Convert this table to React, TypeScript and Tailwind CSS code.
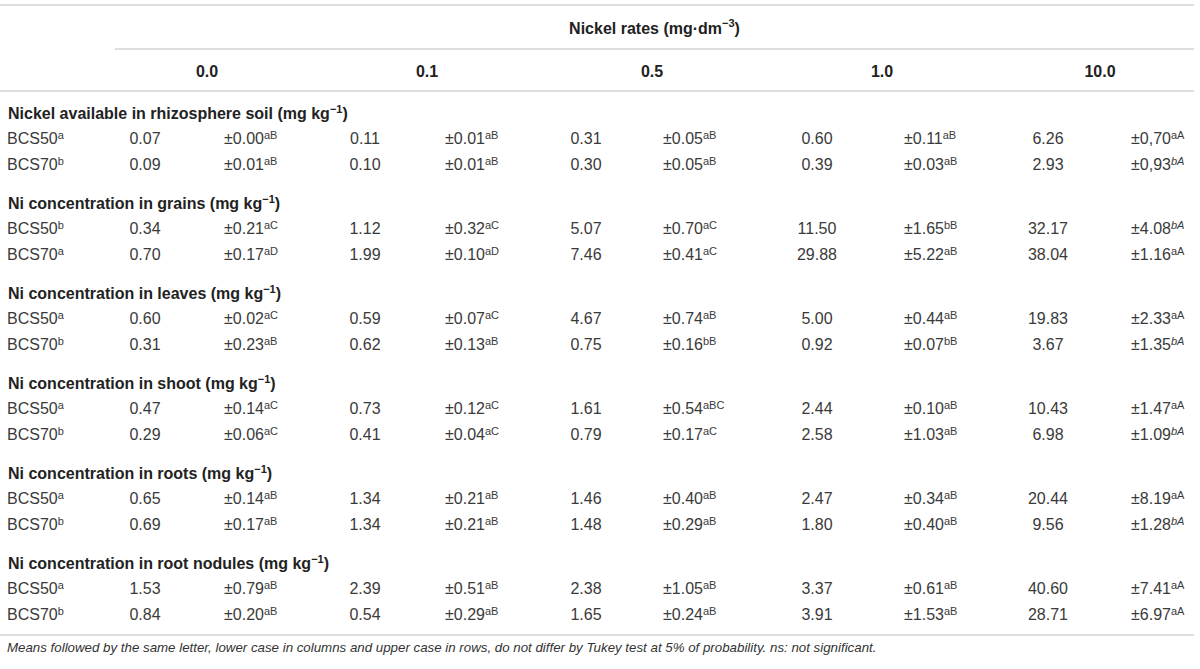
import React from 'react';

interface Row {
  label: string;
  mark: string;
  cells: [string, string, string, boolean?][];
}

interface Group {
  title: string;
  rows: Row[];
}

const groups: Group[] = [
  {
    title: 'Nickel available in rhizosphere soil',
    rows: [
      {
        label: 'BCS50',
        mark: 'a',
        cells: [
          ['0.07', '±0.00', 'aB'],
          ['0.11', '±0.01', 'aB'],
          ['0.31', '±0.05', 'aB'],
          ['0.60', '±0.11', 'aB'],
          ['6.26', '±0,70', 'aA'],
        ],
      },
      {
        label: 'BCS70',
        mark: 'b',
        cells: [
          ['0.09', '±0.01', 'aB'],
          ['0.10', '±0.01', 'aB'],
          ['0.30', '±0.05', 'aB'],
          ['0.39', '±0.03', 'aB'],
          ['2.93', '±0,93', 'bA', true],
        ],
      },
    ],
  },
  {
    title: 'Ni concentration in grains',
    rows: [
      {
        label: 'BCS50',
        mark: 'b',
        cells: [
          ['0.34', '±0.21', 'aC'],
          ['1.12', '±0.32', 'aC'],
          ['5.07', '±0.70', 'aC'],
          ['11.50', '±1.65', 'bB'],
          ['32.17', '±4.08', 'bA', true],
        ],
      },
      {
        label: 'BCS70',
        mark: 'a',
        cells: [
          ['0.70', '±0.17', 'aD'],
          ['1.99', '±0.10', 'aD'],
          ['7.46', '±0.41', 'aC'],
          ['29.88', '±5.22', 'aB'],
          ['38.04', '±1.16', 'aA'],
        ],
      },
    ],
  },
  {
    title: 'Ni concentration in leaves',
    rows: [
      {
        label: 'BCS50',
        mark: 'a',
        cells: [
          ['0.60', '±0.02', 'aC'],
          ['0.59', '±0.07', 'aC'],
          ['4.67', '±0.74', 'aB'],
          ['5.00', '±0.44', 'aB'],
          ['19.83', '±2.33', 'aA'],
        ],
      },
      {
        label: 'BCS70',
        mark: 'b',
        cells: [
          ['0.31', '±0.23', 'aB'],
          ['0.62', '±0.13', 'aB'],
          ['0.75', '±0.16', 'bB'],
          ['0.92', '±0.07', 'bB'],
          ['3.67', '±1.35', 'bA', true],
        ],
      },
    ],
  },
  {
    title: 'Ni concentration in shoot',
    rows: [
      {
        label: 'BCS50',
        mark: 'a',
        cells: [
          ['0.47', '±0.14', 'aC'],
          ['0.73', '±0.12', 'aC'],
          ['1.61', '±0.54', 'aBC'],
          ['2.44', '±0.10', 'aB'],
          ['10.43', '±1.47', 'aA'],
        ],
      },
      {
        label: 'BCS70',
        mark: 'b',
        cells: [
          ['0.29', '±0.06', 'aC'],
          ['0.41', '±0.04', 'aC'],
          ['0.79', '±0.17', 'aC'],
          ['2.58', '±1.03', 'aB'],
          ['6.98', '±1.09', 'bA', true],
        ],
      },
    ],
  },
  {
    title: 'Ni concentration in roots',
    rows: [
      {
        label: 'BCS50',
        mark: 'a',
        cells: [
          ['0.65', '±0.14', 'aB'],
          ['1.34', '±0.21', 'aB'],
          ['1.46', '±0.40', 'aB'],
          ['2.47', '±0.34', 'aB'],
          ['20.44', '±8.19', 'aA'],
        ],
      },
      {
        label: 'BCS70',
        mark: 'b',
        cells: [
          ['0.69', '±0.17', 'aB'],
          ['1.34', '±0.21', 'aB'],
          ['1.48', '±0.29', 'aB'],
          ['1.80', '±0.40', 'aB'],
          ['9.56', '±1.28', 'bA', true],
        ],
      },
    ],
  },
  {
    title: 'Ni concentration in root nodules',
    rows: [
      {
        label: 'BCS50',
        mark: 'a',
        cells: [
          ['1.53', '±0.79', 'aB'],
          ['2.39', '±0.51', 'aB'],
          ['2.38', '±1.05', 'aB'],
          ['3.37', '±0.61', 'aB'],
          ['40.60', '±7.41', 'aA'],
        ],
      },
      {
        label: 'BCS70',
        mark: 'b',
        cells: [
          ['0.84', '±0.20', 'aB'],
          ['0.54', '±0.29', 'aB'],
          ['1.65', '±0.24', 'aB'],
          ['3.91', '±1.53', 'aB'],
          ['28.71', '±6.97', 'aA'],
        ],
      },
    ],
  },
];

// column tracks: label | value/sd x5
const cols = 'grid grid-cols-[110px_70px_150px_70px_151px_70px_161px_70px_161px_70px_111px]';
const sdPad = ['pl-[44px]', 'pl-[45px]', 'pl-[42px]', 'pl-[52px]', 'pl-[48px]'];

const rates = [
  { label: '0.0', pad: 'pr-[26px]' },
  { label: '0.1', pad: 'pr-[27px]' },
  { label: '0.5', pad: 'pr-[29px]' },
  { label: '1.0', pad: 'pr-[31px]' },
  { label: '10.0', pad: 'pr-[7px]' },
];

function Sup({ children, italic }: { children: React.ReactNode; italic?: boolean }) {
  return <sup className={`text-[11px] ${italic ? 'italic' : ''}`}>{children}</sup>;
}

export default function App() {
  return (
    <div className="w-[1200px] h-[669px] bg-white pt-[4px] text-[16px] text-[#3a3a3a] font-['Liberation_Sans',Arial,sans-serif]">
      <div className="w-[1194px]">
        <div className="border-t-2 border-[#dedede]">
          <div className="ml-[115px] h-[44px] flex items-center justify-center pt-[3px] border-b-2 border-[#dedede] font-bold text-[#222]">
            Nickel rates (mg·dm<sup className="text-[11px]">−3</sup>)
          </div>
        </div>

        <div className={`${cols} h-[42px] pt-[3px] items-center border-b-2 border-[#dedede] font-bold text-[#222]`}>
          <div />
          {rates.map((r) => (
            <div key={r.label} className={`col-span-2 text-center ${r.pad}`}>
              {r.label}
            </div>
          ))}
        </div>

        <div className="pt-[10px]">
          {groups.map((g, gi) => (
            <div key={g.title} className={gi > 0 ? 'pt-[16px]' : ''}>
              <div className="h-[22px] flex items-center pt-[2px] pl-[8px] font-bold text-[#222]">
                {g.title} (mg kg<sup className="text-[11px]">−1</sup>)
              </div>
              {g.rows.map((row) => (
                <div key={row.label} className={`${cols} h-[26px] pt-[3px] items-center`}>
                  <div className="pl-[7px]">
                    {row.label}
                    <Sup>{row.mark}</Sup>
                  </div>
                  {row.cells.map(([v, sd, letters, it], ci) => (
                    <React.Fragment key={ci}>
                      <div className="text-center">{v}</div>
                      <div className={sdPad[ci]}>
                        {sd}
                        <Sup italic={it}>{letters}</Sup>
                      </div>
                    </React.Fragment>
                  ))}
                </div>
              ))}
            </div>
          ))}
        </div>

        <div className="mt-[8px] border-t-2 border-[#dedede] pt-[2px] pl-[7px] italic text-[13.3px] leading-[20px] text-[#333]">
          Means followed by the same letter, lower case in columns and upper case in rows, do not differ by Tukey test at 5% of probability. ns: not significant.
        </div>
      </div>
    </div>
  );
}
